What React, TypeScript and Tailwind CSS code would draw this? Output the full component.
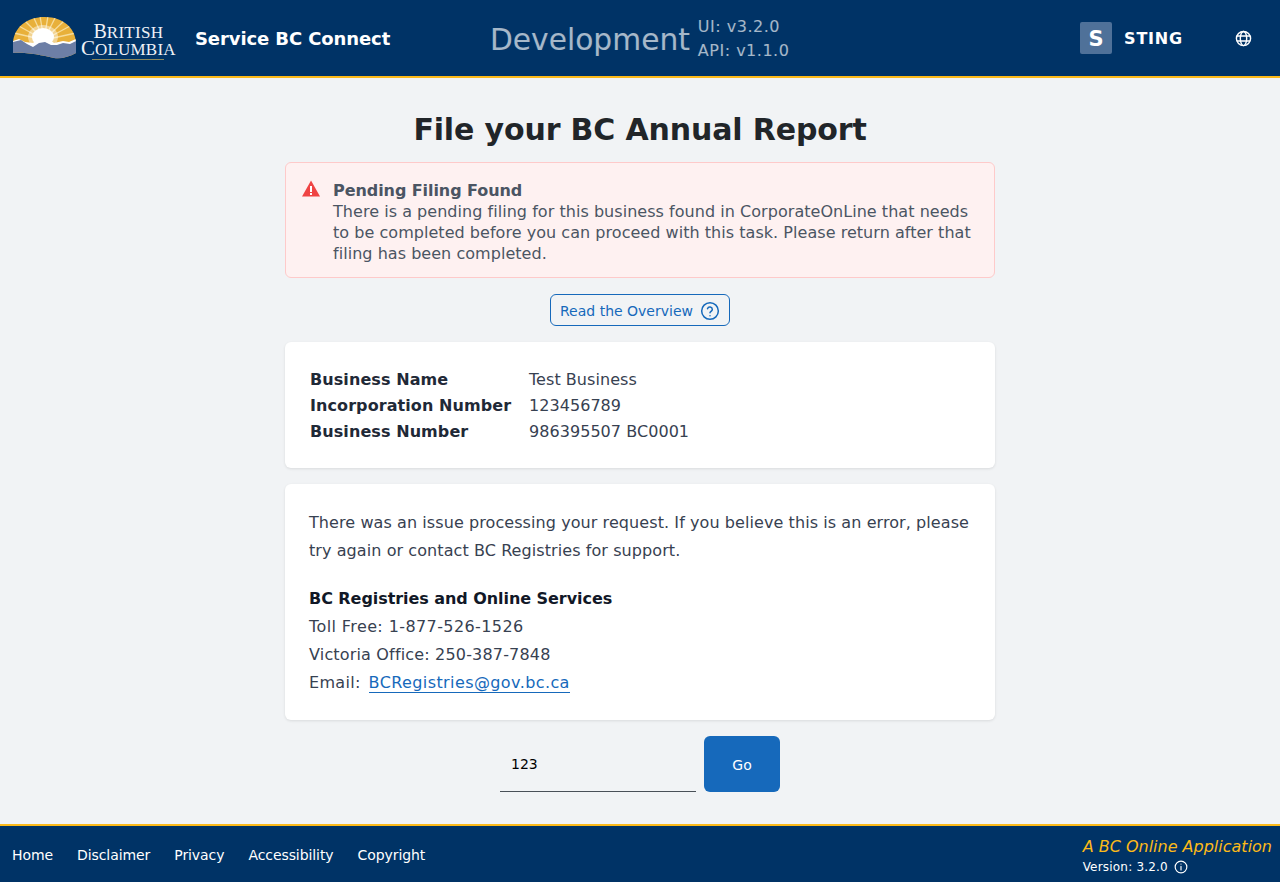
import React from "react";

const sans = "font-['DejaVu_Sans',Verdana,sans-serif]";

function BcLogo() {
	return (
		<div className="flex items-center w-[164px] h-[48px] shrink-0">
			<svg width="64" height="44" viewBox="0 0 64 44" className="shrink-0">
				<defs>
					<clipPath id="dome">
						<path d="M0 27C1 11 14 1 32 1C50 1 62 12 63 26L63 37C56 41 48 43 41 42C28 39 12 36 0 37Z" />
					</clipPath>
				</defs>
				<g clipPath="url(#dome)">
					<rect x="0" y="0" width="64" height="44" fill="#e8b03a" />
					<g stroke="#f6dc9b" strokeWidth="1.3">
						<path d="M31 24L4 9M31 24L11 4M31 24L20 0M31 24L27 0M31 24L35 0M31 24L43 0M31 24L52 4M31 24L59 9M31 24L1 17M31 24L63 17" />
					</g>
					<ellipse cx="30" cy="21" rx="11" ry="9" fill="#fff" />
					<ellipse cx="30" cy="21" rx="15" ry="12" fill="#fff" fillOpacity="0.45" />
					<path d="M0 25L6 23L12 26L20 27L26 22L31 20L36 23L41 27L50 25L56 26L63 23L63 34L0 34Z" fill="#fff" />
					<path d="M0 26L8 24L14 28L20 31L26 27L32 26L38 29L44 29L50 27L57 28L63 25L63 44L0 44Z" fill="#6d7fa6" />
				</g>
			</svg>
			<div className="ml-[4px] flex flex-col items-center font-['Liberation_Serif',serif] text-[#eef1f6] leading-none whitespace-nowrap">
				<span className="text-[20px] leading-[17px] mt-[7px]">
					B<span className="text-[17px] tracking-[0.3px]">RITISH</span>
				</span>
				<span className="text-[21px] leading-[17px] mt-[-1px]">
					C<span className="text-[17px] tracking-[0.2px]">OLUMBIA</span>
				</span>
				<span className="mt-[1px] h-[1px] w-[72px] bg-[#8d8a5e]"></span>
			</div>
		</div>
	);
}

function Globe() {
	return (
		<svg width="17" height="17" viewBox="0 0 24 24" fill="none" stroke="#fff" strokeWidth="2">
			<circle cx="12" cy="12" r="10" />
			<ellipse cx="12" cy="12" rx="4.5" ry="10" />
			<path d="M2.6 8.5H21.4M2.6 15.5H21.4" />
		</svg>
	);
}

function Header() {
	return (
		<header className="h-[78px] bg-[#003366] border-b-2 border-[#fcba19] flex items-center pl-[13px]">
			<BcLogo />
			<span className="ml-[18px] text-[18px] font-bold tracking-[-0.1px] text-white w-[295px] shrink-0 whitespace-nowrap">
				Service BC Connect
			</span>
			<span className="mt-[4px] text-[29.7px] text-white/65 leading-none whitespace-nowrap">Development</span>
			<div className="ml-[8px] mt-[2px] flex flex-col text-[16px] leading-[24px] tracking-[0.5px] text-white/65 whitespace-nowrap">
				<span>UI: v3.2.0</span>
				<span>API: v1.1.0</span>
			</div>
			<div className="ml-auto flex items-center">
				<span className="w-[32px] h-[32px] pt-[3px] rounded-[2px] bg-[#4f7199] text-white font-bold text-[21px] flex items-center justify-center">
					S
				</span>
				<span className="ml-[12px] mt-[1px] text-[16px] font-bold tracking-[0.8px] text-white">STING</span>
				<span className="ml-[52px] mr-[28px] flex">
					<Globe />
				</span>
			</div>
		</header>
	);
}

function Alert() {
	return (
		<div className="w-[710px] h-[116px] rounded-[6px] border border-[#fecaca] bg-[#fef1f1] flex pl-[16px] pt-[17px]">
			<svg width="20" height="20" viewBox="0 0 20 20" className="shrink-0 mt-[-1px] ml-[-1px]">
				<path d="M10 1.5L19 17.5H1Z" fill="#ef4444" />
				<rect x="9" y="7" width="2" height="6" fill="#fff" />
				<rect x="9" y="14" width="2" height="2" fill="#fff" />
			</svg>
			<div className="ml-[12px] text-[16px] leading-[21px] text-[#4b5563] w-[650px]">
				<p className="font-bold tracking-[-0.07px]">Pending Filing Found</p>
				<p className="tracking-[0.04px]">
					There is a pending filing for this business found in CorporateOnLine that needs to be completed
					before you can proceed with this task. Please return after that filing has been completed.
				</p>
			</div>
		</div>
	);
}

function HelpIcon() {
	return (
		<svg width="20" height="20" viewBox="0 0 24 24" fill="none" stroke="#1669bb" strokeWidth="1.8" strokeLinecap="round" className="mt-[-1px]">
			<circle cx="12" cy="12" r="10" />
			<path d="M9 9.2a3 3 0 0 1 5.8 1c0 2-2.8 2.4-2.8 4" />
			<path d="M12 17.6h.01" />
		</svg>
	);
}

function BusinessCard() {
	const rows = [
		["Business Name", "Test Business"],
		["Incorporation Number", "123456789"],
		["Business Number", "986395507 BC0001"],
	];
	return (
		<div className="w-[710px] h-[126px] rounded-[6px] bg-white shadow-[0_1px_3px_rgba(0,0,0,0.1)] pl-[25px] pt-[25px]">
			{rows.map(([label, value]) => (
				<div key={label} className="flex text-[16px] leading-[26px]">
					<span className="w-[219px] font-bold tracking-[0.08px] text-[#1f2937]">{label}</span>
					<span className="tracking-[0.05px] text-[#374151]">{value}</span>
				</div>
			))}
		</div>
	);
}

function ErrorCard() {
	return (
		<div className="w-[710px] h-[236px] rounded-[6px] bg-white shadow-[0_1px_3px_rgba(0,0,0,0.1)] px-[24px] pt-[25px] text-[16px] leading-[28px] text-[#374151]">
			<p className="tracking-[0.08px]">
				There was an issue processing your request. If you believe this is an error, please try again or
				contact BC Registries for support.
			</p>
			<p className="mt-[20px] font-bold tracking-[-0.06px] text-[#111827]">BC Registries and Online Services</p>
			<p className="tracking-[0.4px]">Toll Free: 1-877-526-1526</p>
			<p className="tracking-[0.17px]">Victoria Office: 250-387-7848</p>
			<p>
				<span className="tracking-[0.3px]">Email:</span>
				<a className="ml-[8px] tracking-[0.4px] text-[#1669bb] border-b border-[#1669bb]">BCRegistries@gov.bc.ca</a>
			</p>
		</div>
	);
}

function Footer() {
	const links = ["Home", "Disclaimer", "Privacy", "Accessibility", "Copyright"];
	return (
		<footer className="h-[58px] bg-[#003366] border-t-2 border-[#fcba19] flex items-center pl-[12px] pr-[8px]">
			<nav className="flex gap-[24px] pt-[3px] text-[14px] tracking-[-0.08px] text-white">
				{links.map((link) => (
					<a key={link}>{link}</a>
				))}
			</nav>
			<div className="ml-auto flex flex-col pt-[5px]">
				<span className="text-[16px] italic text-[#fcba19] leading-[22px]">A BC Online Application</span>
				<span className="text-[12px] tracking-[0.2px] text-white leading-[19px] flex items-center gap-[6px]">
					Version: 3.2.0
					<svg width="14" height="14" viewBox="0 0 24 24" fill="none" stroke="#fff" strokeWidth="2" strokeLinecap="round" className="mt-[-2px]">
						<circle cx="12" cy="12" r="10" />
						<path d="M12 11v6M12 7h.01" />
					</svg>
				</span>
			</div>
		</footer>
	);
}

export default function App() {
	return (
		<div className={`${sans} min-h-[882px] flex flex-col bg-[#f1f3f5]`}>
			<Header />
			<main className="flex-1 flex flex-col items-center">
				<h1 className="mt-[31px] text-[30px] tracking-[-0.14px] leading-[42px] font-bold text-[#212529]">
					File your BC Annual Report
				</h1>
				<div className="mt-[11px] flex flex-col items-center gap-[16px]">
					<Alert />
					<button className="h-[32px] w-[180px] pt-[2px] rounded-[6px] border border-[#1669bb] text-[14px] text-[#1669bb] flex items-center justify-center gap-[7px]">
						Read the Overview
						<HelpIcon />
					</button>
					<BusinessCard />
					<ErrorCard />
					<div className="flex items-center gap-[8px]">
						<div className="w-[196px] h-[56px] border-b border-[#495057] flex items-center pl-[11px] pt-[1px] text-[14px] text-black">
							123
						</div>
						<button className="w-[76px] h-[56px] pt-[2px] rounded-[6px] bg-[#1669bb] text-white text-[14px]">Go</button>
					</div>
				</div>
			</main>
			<Footer />
		</div>
	);
}
